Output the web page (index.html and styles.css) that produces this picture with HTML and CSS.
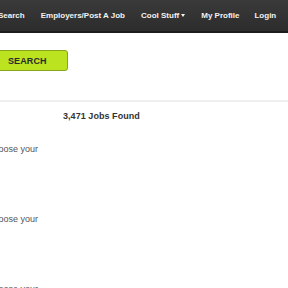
FILE: index.html
```html
<!DOCTYPE html>
<html lang="en">
<head>
    <meta charset="UTF-8">
    <meta name="viewport" content="width=device-width, initial-scale=1.0">
    <title>Job Search</title>
    <link rel="stylesheet" href="styles.css">
</head>
<body>
    <nav class="top-nav">
        <ul class="nav-list">
            <li><a href="#">Search</a></li>
            <li><a href="#">Employers/Post A Job</a></li>
            <li><a href="#">Cool Stuff<span class="caret"></span></a></li>
            <li><a href="#">My Profile</a></li>
            <li><a href="#">Login</a></li>
        </ul>
    </nav>

    <div class="page">
        <div class="search-bar">
            <button class="search-button">SEARCH</button>
        </div>

        <div class="results">
            <aside class="filters">
                <div class="filter-block">Choose your</div>
                <div class="filter-block">Choose your</div>
                <div class="filter-block">Choose your</div>
            </aside>
            <main class="listing">
                <h2 class="count">3,471 Jobs Found</h2>
            </main>
        </div>
    </div>
</body>
</html>
```

FILE: styles.css
```css
body {
    margin: 0;
    padding: 0;
    font-family: "Liberation Sans", Arial, sans-serif;
    background: #fff;
    overflow: hidden;
}

/* top navigation */
.top-nav {
    height: 31px;
    background: linear-gradient(#3a3a3a, #2c2c2c);
    border-bottom: 2px solid #1c1c1c;
}

.nav-list {
    display: flex;
    align-items: center;
    height: 100%;
    margin: 0 0 0 -10px;
    padding: 0;
    list-style: none;
}

.nav-list a {
    display: block;
    padding: 0 8px;
    color: #f2f2f2;
    font-size: 8px;
    font-weight: bold;
    text-decoration: none;
    white-space: nowrap;
}

.nav-list li:nth-child(4) a {
    padding-right: 7px;
}

.caret {
    display: inline-block;
    margin-left: 2px;
    vertical-align: middle;
    border-top: 3px solid #f2f2f2;
    border-left: 2px solid transparent;
    border-right: 2px solid transparent;
}

/* content */
.page {
    margin-left: -13px;
}

.search-bar {
    padding: 17px 0 29px;
    border-bottom: 2px solid #efefef;
}

.search-button {
    display: block;
    height: 21px;
    padding: 0 20px;
    background: #bce31f;
    border: 1px solid #86a61c;
    border-radius: 3px;
    color: #2a2a2a;
    font-family: "Liberation Sans", Arial, sans-serif;
    font-size: 9px;
    font-weight: bold;
    letter-spacing: 0.1px;
}

.results {
    display: grid;
    grid-template-columns: 76px 1fr;
}

.filters {
    padding-top: 42px;
}

.filter-block {
    height: 70px;
    color: #555;
    font-size: 9px;
    line-height: 11px;
}

.count {
    margin: 9px 0 0;
    color: #333;
    font-size: 9px;
    font-weight: bold;
    letter-spacing: 0.05px;
}
```
